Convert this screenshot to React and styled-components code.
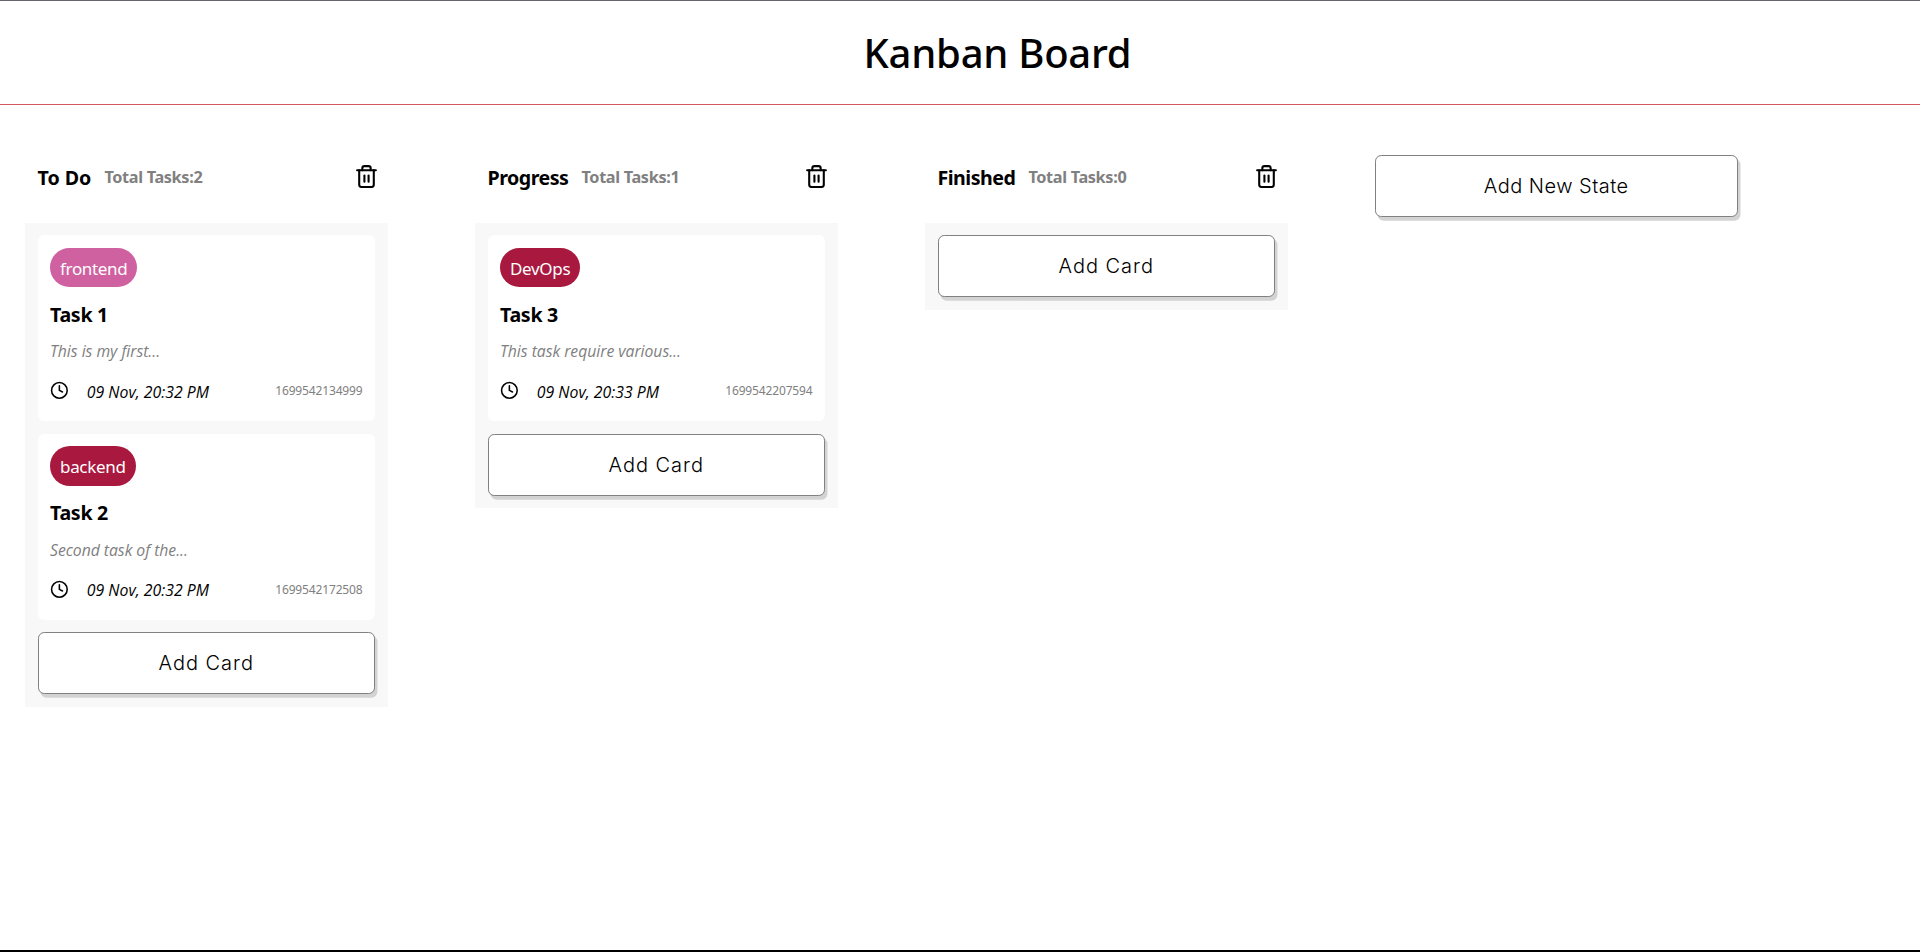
import React from "react";
import styled, { createGlobalStyle } from "styled-components";
import { Clock, Trash2 } from "lucide-react";

const GlobalStyle = createGlobalStyle`
  *, *::before, *::after { box-sizing: border-box; }
  body {
    margin: 0;
    background: #fff;
    color: #000;
    font-family: "Noto Sans", "Open Sans", sans-serif;
  }
  h1, h2, h3, p { margin: 0; }
`;

const Page = styled.div`
  display: flex;
  flex-direction: column;
  height: 952px;
  overflow: hidden;
  border-top: 1px solid #66646c;
  border-bottom: 2px solid #000;
`;

const Header = styled.header`
  display: flex;
  align-items: center;
  justify-content: center;
  height: 104px;
  padding-left: 75px;
  border-bottom: 1px solid #d4585f;
`;

const Title = styled.h1`
  font-size: 40px;
  font-weight: 500;
  line-height: 54px;
  letter-spacing: -0.25px;
`;

const Board = styled.main`
  display: flex;
  align-items: flex-start;
  gap: 87.5px;
  padding: 50px 25px 0;
`;

const Column = styled.section`
  width: 362.5px;
  flex: none;
`;

const ColumnHeader = styled.div`
  display: flex;
  align-items: center;
  height: 43px;
  margin-bottom: 25px;
  padding: 0 9px 0 12.5px;
`;

const ColumnName = styled.h2`
  padding-top: 2px;
  font-size: 19.6px;
  font-weight: 700;
  line-height: 26px;
  letter-spacing: ${(p) => p.$spacing};
`;

const TaskCount = styled.span`
  margin-left: 13px;
  font-size: 16.25px;
  font-weight: 700;
  line-height: 22px;
  letter-spacing: -0.33px;
  color: #808080;
`;

const IconButton = styled.button`
  display: flex;
  margin-left: auto;
  padding: 0;
  border: 0;
  background: none;
  color: #000;
`;

const CardList = styled.div`
  display: flex;
  flex-direction: column;
  gap: 12.5px;
  padding: 12px 12.5px 12.5px;
  background: #f8f8f8;
`;

const Card = styled.article`
  display: flex;
  flex-direction: column;
  align-items: flex-start;
  height: 186px;
  padding: 12.5px;
  border-radius: 6.25px;
  background: #fff;
`;

const Tag = styled.span`
  height: 39.5px;
  padding: 1px 10px 0;
  border-radius: 20px;
  background: ${(p) => p.$color};
  color: #fff;
  font-size: 17px;
  line-height: 39px;
  letter-spacing: -0.32px;
`;

const CardTitle = styled.h3`
  margin-top: 14.6px;
  font-size: 19.6px;
  font-weight: 700;
  line-height: 26px;
  letter-spacing: -0.3px;
`;

const Summary = styled.p`
  margin-top: 12.6px;
  font: italic 400 15.75px/22px "Open Sans", sans-serif;
  letter-spacing: -0.03px;
  color: #808080;
`;

const CardFooter = styled.div`
  display: flex;
  align-items: center;
  align-self: stretch;
  height: 20px;
  margin-top: 18.2px;
  margin-left: -0.5px;
`;

const DateText = styled.span`
  margin-left: 18.5px;
  padding-top: 3px;
  font: italic 400 15.8px/20px "Open Sans", sans-serif;
  letter-spacing: 0.03px;
`;

const CardId = styled.span`
  margin-left: auto;
  padding-top: 2px;
  font-size: 12px;
  line-height: 18px;
  letter-spacing: -0.15px;
  color: #808080;
`;

const AddButton = styled.button`
  width: 100%;
  height: 62px;
  padding: 0;
  border: 1px solid #808080;
  border-radius: 6.25px;
  background: #fff;
  box-shadow: 2.5px 3.75px 0 #d3d3d3;
  color: #000;
  font: 300 20px/28px Inter, sans-serif;
  letter-spacing: ${(p) => p.$spacing};
`;

const columns = [
  {
    name: "To Do",
    spacing: "0px",
    cards: [
      { tag: "frontend", color: "#d061a0", title: "Task 1", text: "This is my first...", date: "09 Nov, 20:32 PM", id: "1699542134999" },
      { tag: "backend", color: "#a9183e", title: "Task 2", text: "Second task of the...", date: "09 Nov, 20:32 PM", id: "1699542172508" },
    ],
  },
  {
    name: "Progress",
    spacing: "-0.5px",
    cards: [
      { tag: "DevOps", color: "#a9183e", title: "Task 3", text: "This task require various...", date: "09 Nov, 20:33 PM", id: "1699542207594" },
    ],
  },
  { name: "Finished", spacing: "-0.5px", cards: [] },
];

function TaskCard({ tag, color, title, text, date, id }) {
  return (
    <Card>
      <Tag $color={color}>{tag}</Tag>
      <CardTitle>{title}</CardTitle>
      <Summary>{text}</Summary>
      <CardFooter>
        <Clock size={18.75} />
        <DateText>{date}</DateText>
        <CardId>{id}</CardId>
      </CardFooter>
    </Card>
  );
}

export default function App() {
  return (
    <Page>
      <GlobalStyle />
      <Header>
        <Title>Kanban Board</Title>
      </Header>
      <Board>
        {columns.map((column) => (
          <Column key={column.name}>
            <ColumnHeader>
              <ColumnName $spacing={column.spacing}>{column.name}</ColumnName>
              <TaskCount>Total Tasks:{column.cards.length}</TaskCount>
              <IconButton aria-label="Delete state">
                <Trash2 size={25} />
              </IconButton>
            </ColumnHeader>
            <CardList>
              {column.cards.map((card) => (
                <TaskCard key={card.id} {...card} />
              ))}
              <AddButton $spacing="0.97px">Add Card</AddButton>
            </CardList>
          </Column>
        ))}
        <Column>
          <AddButton $spacing="0.48px">Add New State</AddButton>
        </Column>
      </Board>
    </Page>
  );
}
